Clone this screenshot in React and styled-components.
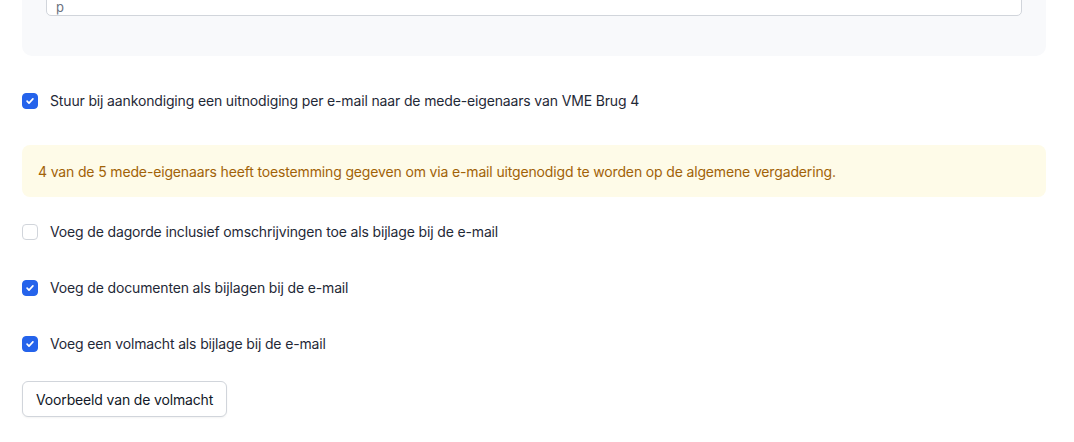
import React from "react";
import styled, { createGlobalStyle } from "styled-components";

const GlobalStyle = createGlobalStyle`
  html, body {
    margin: 0;
    padding: 0;
    background: #ffffff;
  }
  body {
    font-family: Inter, "Liberation Sans", sans-serif;
    letter-spacing: -0.15px;
    color: #1f2937;
  }
`;

const options = [
  { id: "agenda", label: "Voeg de dagorde inclusief omschrijvingen toe als bijlage bij de e-mail", checked: false },
  { id: "docs", label: "Voeg de documenten als bijlagen bij de e-mail", checked: true },
  { id: "proxy", label: "Voeg een volmacht als bijlage bij de e-mail", checked: true },
];

function Check({ checked }) {
  return (
    <Box $checked={checked}>
      {checked && (
        <svg width="10" height="10" viewBox="0 0 12 12" fill="none">
          <path d="M2.5 6.2l2.3 2.3 4.7-5" stroke="#fff" strokeWidth="2" strokeLinecap="round" strokeLinejoin="round" />
        </svg>
      )}
    </Box>
  );
}

export default function App() {
  return (
    <>
      <GlobalStyle />
      <Page>
        <Panel>
          <Input value="p" readOnly />
        </Panel>

        <CheckRow $top={35}>
          <Check checked />
          <span>Stuur bij aankondiging een uitnodiging per e-mail naar de mede-eigenaars van VME Brug 4</span>
        </CheckRow>

        <Alert>
          4 van de 5 mede-eigenaars heeft toestemming gegeven om via e-mail uitgenodigd te worden op de algemene vergadering.
        </Alert>

        {options.map((o, i) => (
          <CheckRow key={o.id} $top={i === 0 ? 25 : 36}>
            <Check checked={o.checked} />
            <span>{o.label}</span>
          </CheckRow>
        ))}

        <Button>Voorbeeld van de volmacht</Button>
      </Page>
    </>
  );
}

const Page = styled.div`
  padding: 0 28px 40px 22px;
  display: flex;
  flex-direction: column;
  align-items: flex-start;
`;

const Panel = styled.div`
  align-self: stretch;
  margin-top: -40px;
  background: #f8f9fb;
  border-radius: 0 0 10px 10px;
  padding: 24px 24px 40px;
`;

const Input = styled.input`
  display: block;
  box-sizing: border-box;
  width: 100%;
  height: 32px;
  padding: 14px 9px 0;
  border: 1px solid #d1d5db;
  border-radius: 5px;
  background: #ffffff;
  font-family: inherit;
  font-size: 13px;
  line-height: 17px;
  color: #6b7280;
  outline: none;
`;

const CheckRow = styled.label`
  display: flex;
  align-items: center;
  gap: 12px;
  margin-top: ${({ $top }) => $top}px;
  height: 20px;
  font-size: 14px;
  line-height: 20px;
  color: #1f2937;
`;

const Box = styled.span`
  box-sizing: border-box;
  width: 16px;
  height: 16px;
  flex: none;
  display: flex;
  align-items: center;
  justify-content: center;
  border-radius: 4px;
  border: 1px solid ${({ $checked }) => ($checked ? "#2563eb" : "#d1d5db")};
  background: ${({ $checked }) => ($checked ? "#2563eb" : "#ffffff")};
`;

const Alert = styled.div`
  align-self: stretch;
  box-sizing: border-box;
  margin-top: 34px;
  height: 52px;
  padding: 0 16px;
  display: flex;
  align-items: center;
  background: #fefbe8;
  border-radius: 8px;
  font-size: 14px;
  color: #a16207;
`;

const Button = styled.button`
  margin-top: 27px;
  height: 36px;
  padding: 0 13px;
  background: #ffffff;
  border: 1px solid #d1d5db;
  border-radius: 6px;
  font-family: inherit;
  font-size: 14px;
  letter-spacing: -0.15px;
  color: #111827;
  box-shadow: 0 1px 2px rgba(0, 0, 0, 0.05);
`;
